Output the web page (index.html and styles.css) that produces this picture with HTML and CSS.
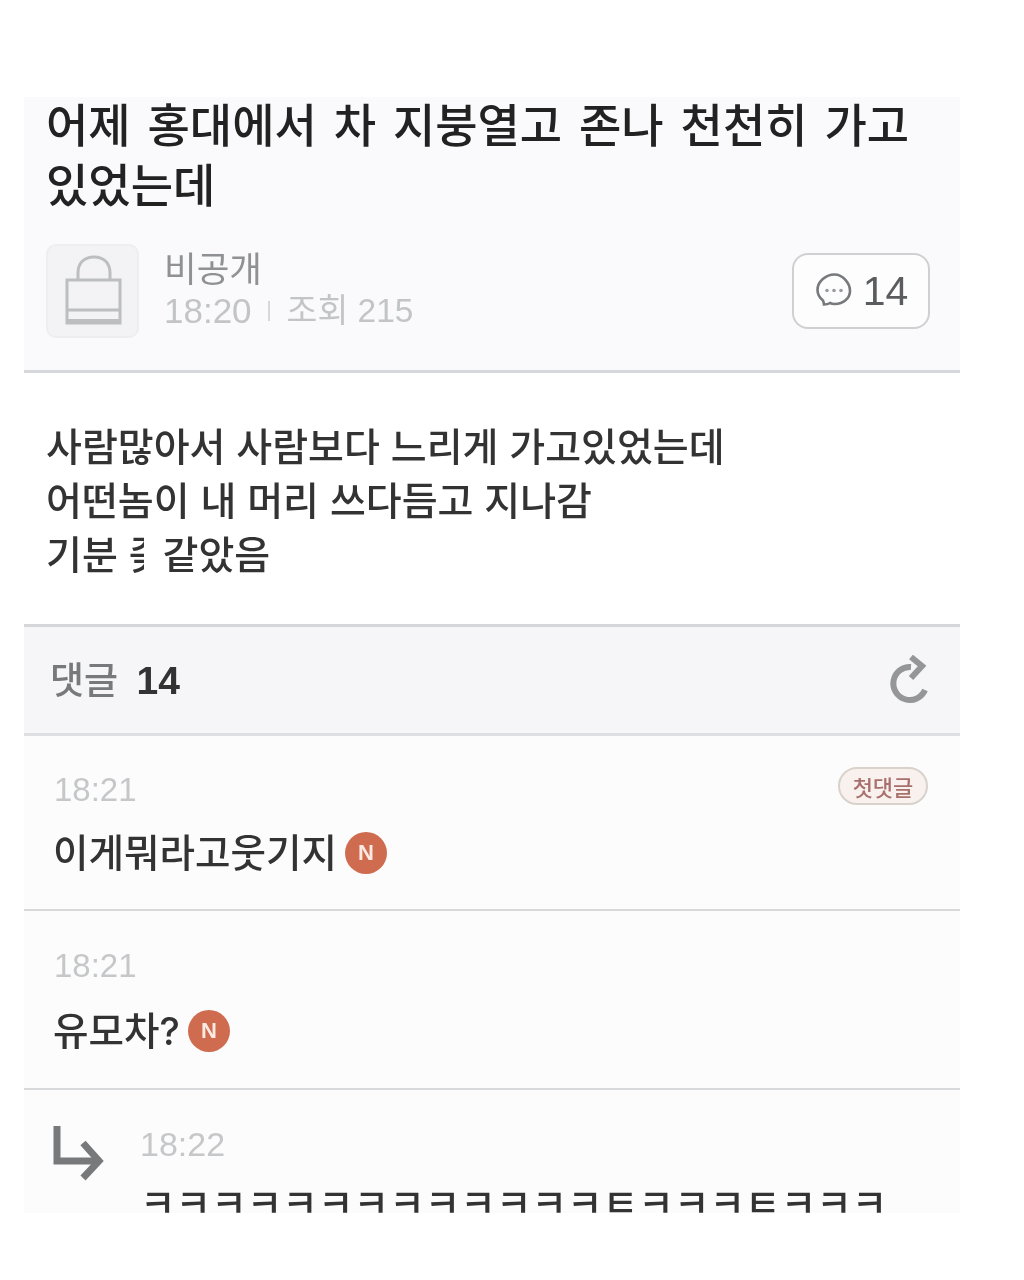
FILE: index.html
```html
<!DOCTYPE html>
<html lang="ko">
<head>
<meta charset="utf-8">
<title>어제 홍대에서</title>
<link rel="stylesheet" href="styles.css">
</head>
<body>
<main class="page">
  <header class="post-head">
    <h1 class="title">어제 홍대에서 차 지붕열고 존나 천천히 가고 있었는데</h1>
    <div class="meta">
      <div class="avatar">
        <svg width="62" height="76" viewBox="0 0 62 76" fill="none" stroke="#bcbec0" stroke-width="3">
          <path d="M16 27V20C16 10 22 4 32 4S48 10 48 20V27"/>
          <rect x="5" y="27" width="53" height="43"/>
          <path d="M5 57H58"/>
          <path d="M5 68H58" stroke-width="4"/>
        </svg>
      </div>
      <div class="author">
        <div class="author-name">비공개</div>
        <div class="author-info"><span>18:20</span><i class="sep"></i><span class="views">조회 215</span></div>
      </div>
      <div class="count-box">
        <svg width="40" height="40" viewBox="0 0 40 40" fill="none" stroke="#77797c" stroke-width="2.6">
          <path d="M10 33.5C12 33.5 14.500 33 16 32C17.500 32.800 19 33 21 33C29 33 36 27.500 36 20S29 3.500 20.500 3.500S3.500 10.500 3.500 19C3.500 24 6.500 27.500 9 29.500C9.500 31 10 32.500 10 33.500Z"/>
          <g fill="#9a9c9f" stroke="none"><circle cx="13" cy="19.500" r="1.800"/><circle cx="20" cy="19.500" r="1.800"/><circle cx="27" cy="19.500" r="1.800"/></g>
        </svg>
        <span>14</span>
      </div>
    </div>
  </header>

  <section class="body-text">
    <p>사람많아서 사람보다 느리게 가고있었는데</p>
    <p>어떤놈이 내 머리 쓰다듬고 지나감</p>
    <p>기분 <span class="censored">좆</span> 같았음</p>
  </section>

  <section class="comment-bar">
    <div class="comment-label">댓글 <strong>14</strong></div>
    <svg class="refresh" width="44" height="50" viewBox="0 0 44 50" fill="none" stroke="#949698" stroke-width="6">
      <path d="M38 35A16.500 16.500 0 1 1 24 12"/>
      <path d="M24 2L35 11L24 23"/>
    </svg>
  </section>

  <article class="comment">
    <div class="comment-top">
      <time class="time">18:21</time>
      <span class="first-badge">첫댓글</span>
    </div>
    <p class="comment-text">이게뭐라고웃기지<span class="new-badge">N</span></p>
  </article>

  <article class="comment comment-second">
    <time class="time">18:21</time>
    <p class="comment-text">유모차?<span class="new-badge">N</span></p>
  </article>

  <article class="reply">
    <svg class="reply-arrow" width="52" height="58" viewBox="0 0 52 58" fill="none" stroke="#77797b" stroke-width="7">
      <path d="M5 0V35H46"/>
      <path d="M31 17L47 35L31 52"/>
    </svg>
    <div class="reply-body">
      <time class="time time-reply">18:22</time>
      <p class="reply-text">ㅋㅋㅋㅋㅋㅋㅋㅋㅋㅋㅋㅋㅋㅌㅋㅋㅋㅌㅋㅋㅋ</p>
    </div>
  </article>
</main>
</body>
</html>
```

FILE: styles.css
```css
* {
  box-sizing: border-box;
}

html,
body {
  margin: 0;
  background: #fff;
}

body {
  height: 1280px;
  overflow: hidden;
  padding: 97px 64px 0 24px;
  font-family: "Liberation Sans", "Noto Sans CJK KR", sans-serif;
  color: #2c2c2e;
}

.page {
  width: 936px;
  height: 1116px;
  overflow: hidden;
  filter: blur(0.6px);
  font-family: "Liberation Sans", "Noto Sans CJK KR", sans-serif;
}

p,
h1 {
  margin: 0;
}

.post-head {
  display: flow-root;
  height: 276px;
  padding: 0 30px 0 22px;
  background: #fafafc;
  border-bottom: 3px solid #d6d7da;
}

.title {
  margin-top: -5px;
  font-size: 46px;
  line-height: 60px;
  font-weight: 500;
  color: #222;
  font-family: "Noto Sans CJK KR", sans-serif;
  word-spacing: 4px;
  word-break: keep-all;
}

.meta {
  display: flex;
  align-items: center;
  margin-top: 32px;
}

.avatar {
  width: 93px;
  height: 94px;
  display: flex;
  align-items: center;
  justify-content: center;
  background: #f3f3f5;
  border: 2px solid #eeeef0;
  border-radius: 10px;
  flex: none;
}

.author {
  margin-left: 25px;
  flex: 1;
}

.author-name {
  margin-top: -4px;
  font-size: 35.5px;
  line-height: 44px;
  color: #8f9194;
  font-family: "Noto Sans CJK KR", sans-serif;
}

.author-info {
  display: flex;
  align-items: center;
  font-size: 35px;
  line-height: 44px;
  color: #c3c4c6;
}

.views {
  font-size: 33.500px;
}

.sep {
  width: 2px;
  height: 20px;
  margin: 0 17px 0 16px;
  background: #d8d8da;
}

.count-box {
  width: 138px;
  height: 76px;
  display: flex;
  align-items: center;
  justify-content: center;
  gap: 9px;
  background: #fdfdfe;
  border: 2px solid #cfd0d2;
  border-radius: 16px;
  font-size: 41px;
  color: #5b5c5f;
}

.body-text {
  height: 251px;
  padding: 44px 22px 0;
  background: #fff;
  font-family: "Noto Sans CJK KR", sans-serif;
  font-size: 39px;
  font-weight: 500;
  line-height: 54px;
  color: #333;
}

.censored {
  display: inline-block;
  width: 15px;
  height: 54px;
  margin-right: 8px;
  overflow: hidden;
  vertical-align: bottom;
}

.comment-bar {
  height: 112px;
  display: flex;
  align-items: center;
  justify-content: space-between;
  padding: 0 29px 0 26px;
  background: #f6f6f8;
  border-top: 3px solid #d5d6da;
  border-bottom: 3px solid #dedfe2;
}

.comment-label {
  margin-top: -5px;
  font-size: 37px;
  font-weight: 500;
  font-family: "Noto Sans CJK KR", sans-serif;
  color: #77797c;
}

.comment-label strong {
  margin-left: 8px;
  font-family: "Liberation Sans", sans-serif;
  font-size: 39px;
  color: #333;
}

.comment {
  height: 175px;
  padding: 34px 28px 0 30px;
  background: #fcfcfd;
  border-bottom: 2px solid #d8d9db;
}

.comment-second {
  height: 179px;
  padding-top: 35px;
}

.comment-top {
  display: flex;
  justify-content: space-between;
  align-items: flex-start;
}

.time {
  display: block;
  font-size: 33px;
  line-height: 40px;
  color: #c6c7c9;
}

.time-reply {
  font-size: 34px;
}

.first-badge {
  width: 90px;
  height: 38px;
  display: flex;
  align-items: center;
  justify-content: center;
  margin: -3px 4px 0 0;
  font-size: 22px;
  font-weight: 500;
  font-family: "Noto Sans CJK KR", sans-serif;
  color: #a8706c;
  background: #f8f1ee;
  border: 2px solid #d8d2cb;
  border-radius: 19px;
}

.comment-text {
  display: flex;
  align-items: center;
  gap: 8px;
  margin: 16px 0 0 -1px;
  font-family: "Inter", "Noto Sans CJK KR", sans-serif;
  font-size: 38.600px;
  font-weight: 500;
  line-height: 54px;
  color: #333;
}

.comment-second .comment-text {
  margin-top: 18px;
}

.new-badge {
  width: 42px;
  height: 42px;
  display: flex;
  align-items: center;
  justify-content: center;
  border-radius: 50%;
  background: #cf6b4e;
  color: #fbe9e2;
  font-family: "Liberation Sans", sans-serif;
  font-size: 22px;
  font-weight: 700;
}

.reply {
  display: flex;
  height: 130px;
  padding: 30px 0 0 28px;
  background: #fcfcfd;
}

.reply-arrow {
  flex: none;
  margin: 6px 36px 0 0;
}

.reply-body {
  flex: 1;
  margin-top: 4px;
}

.reply-text {
  margin-top: 9px;
  font-family: "Noto Sans CJK KR", sans-serif;
  font-size: 38.700px;
  font-weight: 500;
  line-height: 54px;
  color: #333;
  white-space: nowrap;
}
```
